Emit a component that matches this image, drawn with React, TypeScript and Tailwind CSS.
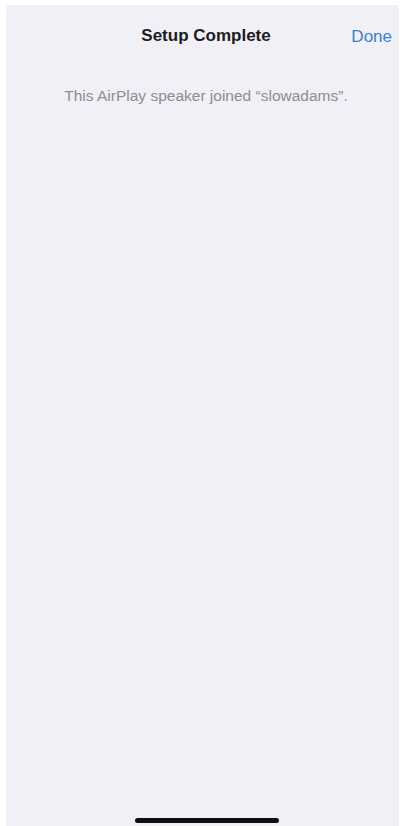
import React from "react";

function App() {
  return (
    <main className="h-[826px] w-[409px] overflow-hidden bg-white pl-[6px] pr-[10px] pt-[5px] font-['Liberation_Sans',Arial,sans-serif]">
      <div className="flex h-full flex-col bg-[#f1f0f6]">
        <header className="relative flex h-[60px] items-center justify-center pl-[7px] pt-[1px]">
          <h1 className="text-[17px] font-bold text-[#1c1c1e]">Setup Complete</h1>
          <button className="absolute right-[7px] top-[19px] text-[17px] text-[#3a82c8]">
            Done
          </button>
        </header>
        <p className="mt-[19px] pl-[7px] text-center text-[15.5px] text-[#8d8d92]">
          This AirPlay speaker joined “slowadams”.
        </p>
        <div className="flex-1" />
        <div className="flex justify-center pb-[3px] pl-[8px]">
          <div className="h-[5px] w-[144px] rounded-full bg-[#111]" />
        </div>
      </div>
    </main>
  );
}

export default App;
